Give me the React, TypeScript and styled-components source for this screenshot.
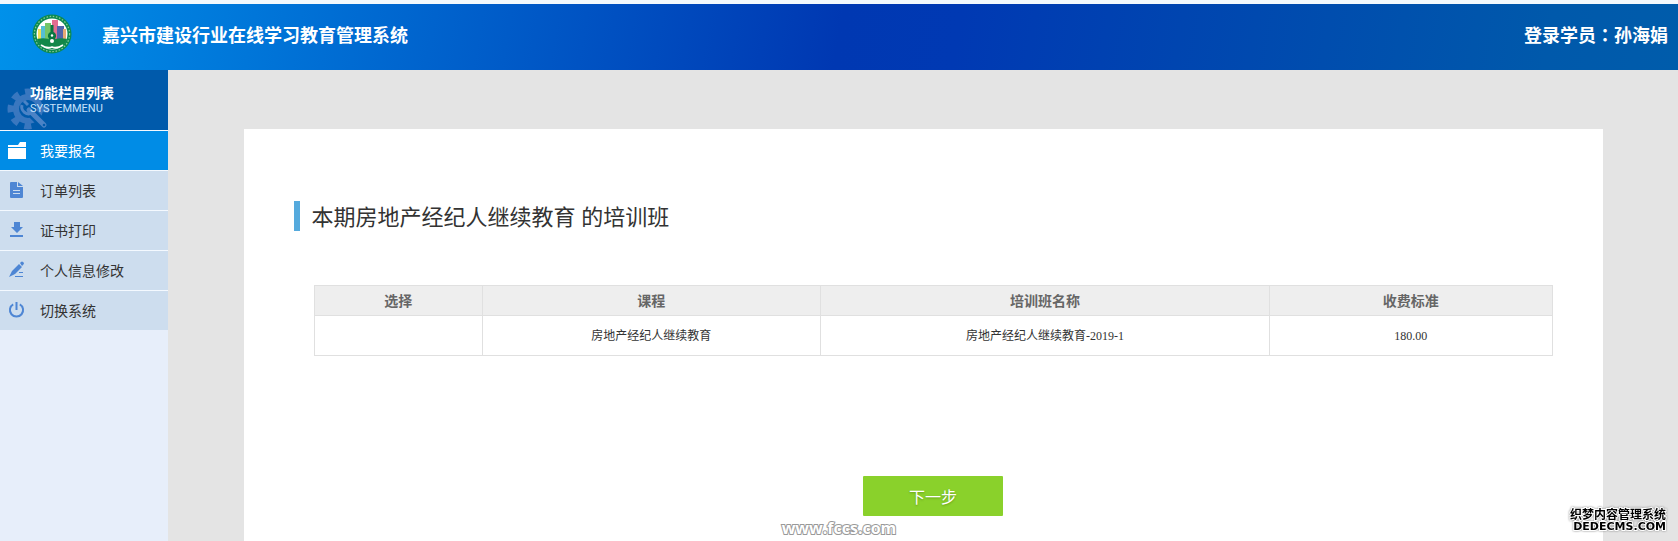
import React from "react";
import styled, { createGlobalStyle, css } from "styled-components";

const sans = `"Noto Sans CJK SC", sans-serif`;

const GlobalStyle = createGlobalStyle`
  *, *::before, *::after { box-sizing: border-box; }
  body { margin: 0; background: #f3f9fd; font-family: ${sans}; font-size: 14px; color: #333; }
`;

const Page = styled.div`
  position: relative;
  display: flex;
  flex-direction: column;
  min-height: 100vh;
  padding-top: 4px;
`;

const Header = styled.header`
  display: flex;
  align-items: center;
  height: 66px;
  padding: 0 10px 6px 32px;
  color: #fff;
  font-size: 18px;
  font-weight: 700;
  line-height: 24px;
  background: linear-gradient(100deg, #0091ea 0%, #0038b2 50%, #0039b3 57%, #0059ab 92%, #005cab 100%);
`;

const Brand = styled.h1`
  flex: 1;
  margin: 0 0 0 30px;
  font-size: 18px;
  line-height: 24px;
`;

const Colon = styled.span`
  font-family: "Noto Sans CJK TC", sans-serif;
`;

const Body = styled.div`
  display: flex;
  flex: 1;
`;

const Sidebar = styled.aside`
  width: 168px;
  flex: none;
  background: #e7eefa;
`;

const SidebarHead = styled.div`
  position: relative;
  height: 60px;
  padding: 12px 0 0 30px;
  overflow: hidden;
  color: #fff;
  background: #005aab;
`;

const GearArt = styled.svg`
  position: absolute;
  left: 6px;
  top: 15px;
`;

const SidebarTitle = styled.h2`
  position: relative;
  margin: 0;
  font-size: 14px;
  font-weight: 700;
  line-height: 20px;
`;

const SidebarSub = styled.div`
  position: relative;
  color: #c5e2fb;
  font-family: Roboto, sans-serif;
  font-size: 11px;
  line-height: 14px;
`;

const NavList = styled.ul`
  margin: 0;
  padding: 0;
  list-style: none;
`;

const NavLink = styled.a<{ $active?: boolean }>`
  display: flex;
  align-items: center;
  height: 40px;
  padding: 0 0 2px 8px;
  gap: 14px;
  border-top: 1px solid #f4f9ff;
  font-size: 14px;
  line-height: 20px;
  text-decoration: none;
  color: #333;
  background: #cdddee;
  ${(p) => p.$active && css`
    color: #fff;
    background: #008ce6;
  `}
  svg { flex: none; }
`;

const Main = styled.main`
  display: flex;
  flex: 1;
  justify-content: center;
  padding-top: 59px;
  background: #e4e4e4;
`;

const Card = styled.section`
  width: 90%;
  padding: 72px 50px 25px;
  background: #fff;
`;

const Heading = styled.h2`
  margin: 0 0 54px;
  padding-left: 12px;
  border-left: 6px solid #55aadd;
  color: #333;
  font-family: "Open Sans", ${sans};
  font-size: 22px;
  font-weight: 400;
  line-height: 30px;
`;

const Content = styled.form`
  display: flex;
  flex-direction: column;
  align-items: center;
  gap: 120px;
  padding-left: 20px;
`;

const ClassTable = styled.table`
  width: 100%;
  border-collapse: collapse;
  table-layout: fixed;
  text-align: center;
`;

const Column = styled.col<{ $share: number }>`
  width: ${(p) => p.$share}%;
`;

const HeadCell = styled.th`
  height: 30px;
  padding: 0 0 2px;
  border: 1px solid #e0e0e0;
  color: #666;
  background: #eee;
  font-size: 14px;
  font-weight: 700;
  line-height: 20px;
`;

const Cell = styled.td`
  height: 40px;
  padding: 0;
  border: 1px solid #e0e0e0;
  font-family: "Liberation Serif", "Noto Sans CJK SC", serif;
  font-size: 12px;
  line-height: 20px;
`;

const NextButton = styled.button`
  width: 140px;
  height: 40px;
  padding: 0;
  border: 0;
  border-radius: 1px;
  color: #fff;
  background: #8ad12b;
  font-family: ${sans};
  font-size: 16px;
  line-height: 24px;
  text-shadow: 0 1px 2px rgba(60, 100, 0, 0.45);
  cursor: pointer;
`;

const SiteMark = styled.div`
  position: absolute;
  right: 0;
  bottom: 3px;
  left: 0;
  color: #fff;
  font-family: "Open Sans", sans-serif;
  font-size: 16px;
  font-weight: 700;
  line-height: 20px;
  text-align: center;
  -webkit-text-stroke: 2px #999;
  paint-order: stroke fill;
  pointer-events: none;
`;

const CmsMark = styled.div`
  position: absolute;
  right: 12px;
  bottom: 8px;
  color: #000;
  font-size: 12px;
  font-weight: 700;
  line-height: 15px;
  text-align: right;
  -webkit-text-stroke: 2px #fff;
  paint-order: stroke fill;
  filter: drop-shadow(0 0 1px #888);
  pointer-events: none;
`;

const CmsDomain = styled.div`
  font-family: "DejaVu Sans", sans-serif;
  font-size: 11px;
  line-height: 12px;
`;

const Logo = () => (
  <svg width="40" height="40" viewBox="0 0 40 40" aria-hidden="true">
    <circle cx="20" cy="20" r="19.5" fill="#0c8a50" />
    <circle cx="20" cy="20" r="17.6" fill="none" stroke="#8fcb98" strokeWidth="1.2" strokeDasharray="1.5 1.7" />
    <circle cx="20" cy="20" r="15.5" fill="#fff" />
    <path d="M6 15h5v10H6z" fill="#f3df55" />
    <path d="M9 12h5v14H9z" fill="#54bfd4" />
    <path d="M13 9h6v16h-6z" fill="#75c568" />
    <path d="M20 6h6v19h-6z" fill="#e36d91" />
    <path d="M25 12h7v13h-7z" fill="#5364aa" />
    <path d="M31 15h3v10h-3z" fill="#e7aa76" />
    <path d="M18.5 11h3v7a4 4 0 0 1 1.8 6.2l-.7 3.3h-5.2l-.7-3.3a4 4 0 0 1 1.8-6.2z" fill="#0a7741" />
    <path d="M5 25q8-2 15 1q7-3 15-1q-2 9-15 10q-13-1-15-10z" fill="#128749" />
    <path d="M9 31q6 4 11 2q5 2 11-2" fill="none" stroke="#fff" strokeWidth="1.6" />
    <circle cx="20" cy="21.5" r="1.2" fill="#fff" />
    <circle cx="20" cy="27" r="2" fill="#fff" />
  </svg>
);

const Gear = () => (
  <GearArt width="44" height="46" viewBox="0 0 44 46" aria-hidden="true">
    <g fill="none" stroke="#3977bf">
      <circle cx="22" cy="24" r="12" strokeWidth="6" />
      <circle cx="22" cy="24" r="17" strokeWidth="7" strokeDasharray="7 6.35" strokeDashoffset="3.5" />
    </g>
    <circle cx="22" cy="24" r="6" fill="#005aab" />
    <path d="M22 24L39 41" stroke="#005aab" strokeWidth="10" strokeLinecap="round" />
    <path d="M23 25L38 40" stroke="#4b83c6" strokeWidth="5" strokeLinecap="round" />
    <path d="M16 20a7 7 0 0 0 10 8M18 16l4 4" fill="none" stroke="#4b83c6" strokeWidth="3" />
    <circle cx="38" cy="40" r="1.3" fill="#005aab" />
  </GearArt>
);

const FolderIcon = () => (
  <svg width="18" height="18" viewBox="0 0 18 18" aria-hidden="true" fill="#fff">
    <path d="M0 4h10l2-3h6v5H0zM0 7h18v11H0z" />
  </svg>
);

const DocumentIcon = () => (
  <svg width="18" height="18" viewBox="0 0 18 18" aria-hidden="true">
    <path d="M3 1h6v5h6v10q0 1-1 1H3q-1 0-1-1V2q0-1 1-1zM10 1l5 4h-5z" fill="#4e86d4" />
    <path d="M5 9.5h7M5 12.5h7" stroke="#cdddee" />
  </svg>
);

const DownloadIcon = () => (
  <svg width="18" height="18" viewBox="0 0 18 18" aria-hidden="true" fill="#4e86d4">
    <path d="M6 1h6v5h3l-6 6-6-6h3zM2 14h13v2H2z" />
  </svg>
);

const PencilIcon = () => (
  <svg width="18" height="18" viewBox="0 0 18 18" aria-hidden="true" fill="#4e86d4">
    <path d="M11 3l3 3-7 7-6 3 3-6zM12 2l1-1q1-1 2 0l1 1q0 1-1 2l-1 1zM11 11h4v1h-4zM7 15h8v1H7z" />
  </svg>
);

const PowerIcon = () => (
  <svg width="18" height="18" viewBox="0 0 18 18" aria-hidden="true" fill="none" stroke="#4e86d4" strokeWidth="2">
    <path d="M5.2 3.3a6.6 6.6 0 1 0 6.6 0M8.5 1v8" />
  </svg>
);

const navItems = [
  { label: "我要报名", icon: <FolderIcon />, active: true },
  { label: "订单列表", icon: <DocumentIcon /> },
  { label: "证书打印", icon: <DownloadIcon /> },
  { label: "个人信息修改", icon: <PencilIcon /> },
  { label: "切换系统", icon: <PowerIcon /> },
];

const columns = [
  { title: "选择", share: 13.6 },
  { title: "课程", share: 27.3 },
  { title: "培训班名称", share: 36.3 },
  { title: "收费标准", share: 22.8 },
];

export default function App() {
  return (
    <>
      <GlobalStyle />
      <Page lang="zh-CN">
        <Header>
          <Logo />
          <Brand>嘉兴市建设行业在线学习教育管理系统</Brand>
          <div>登录学员<Colon lang="zh-TW">：</Colon>孙海娟</div>
        </Header>
        <Body>
          <Sidebar>
            <SidebarHead>
              <Gear />
              <SidebarTitle>功能栏目列表</SidebarTitle>
              <SidebarSub>SYSTEMMENU</SidebarSub>
            </SidebarHead>
            <nav>
              <NavList>
                {navItems.map((item) => (
                  <li key={item.label}>
                    <NavLink href="#" $active={item.active} aria-current={item.active ? "page" : undefined}>
                      {item.icon}
                      {item.label}
                    </NavLink>
                  </li>
                ))}
              </NavList>
            </nav>
          </Sidebar>
          <Main>
            <Card>
              <Heading>本期房地产经纪人继续教育 的培训班</Heading>
              <Content>
                <ClassTable>
                  <colgroup>
                    {columns.map((c) => <Column key={c.title} $share={c.share} />)}
                  </colgroup>
                  <thead>
                    <tr>{columns.map((c) => <HeadCell key={c.title} scope="col">{c.title}</HeadCell>)}</tr>
                  </thead>
                  <tbody>
                    <tr>
                      <Cell />
                      <Cell>房地产经纪人继续教育</Cell>
                      <Cell>房地产经纪人继续教育-2019-1</Cell>
                      <Cell>180.00</Cell>
                    </tr>
                  </tbody>
                </ClassTable>
                <NextButton type="button">下一步</NextButton>
              </Content>
            </Card>
          </Main>
        </Body>
        <SiteMark>www.fccs.com</SiteMark>
        <CmsMark>
          织梦内容管理系统
          <CmsDomain>DEDECMS.COM</CmsDomain>
        </CmsMark>
      </Page>
    </>
  );
}
